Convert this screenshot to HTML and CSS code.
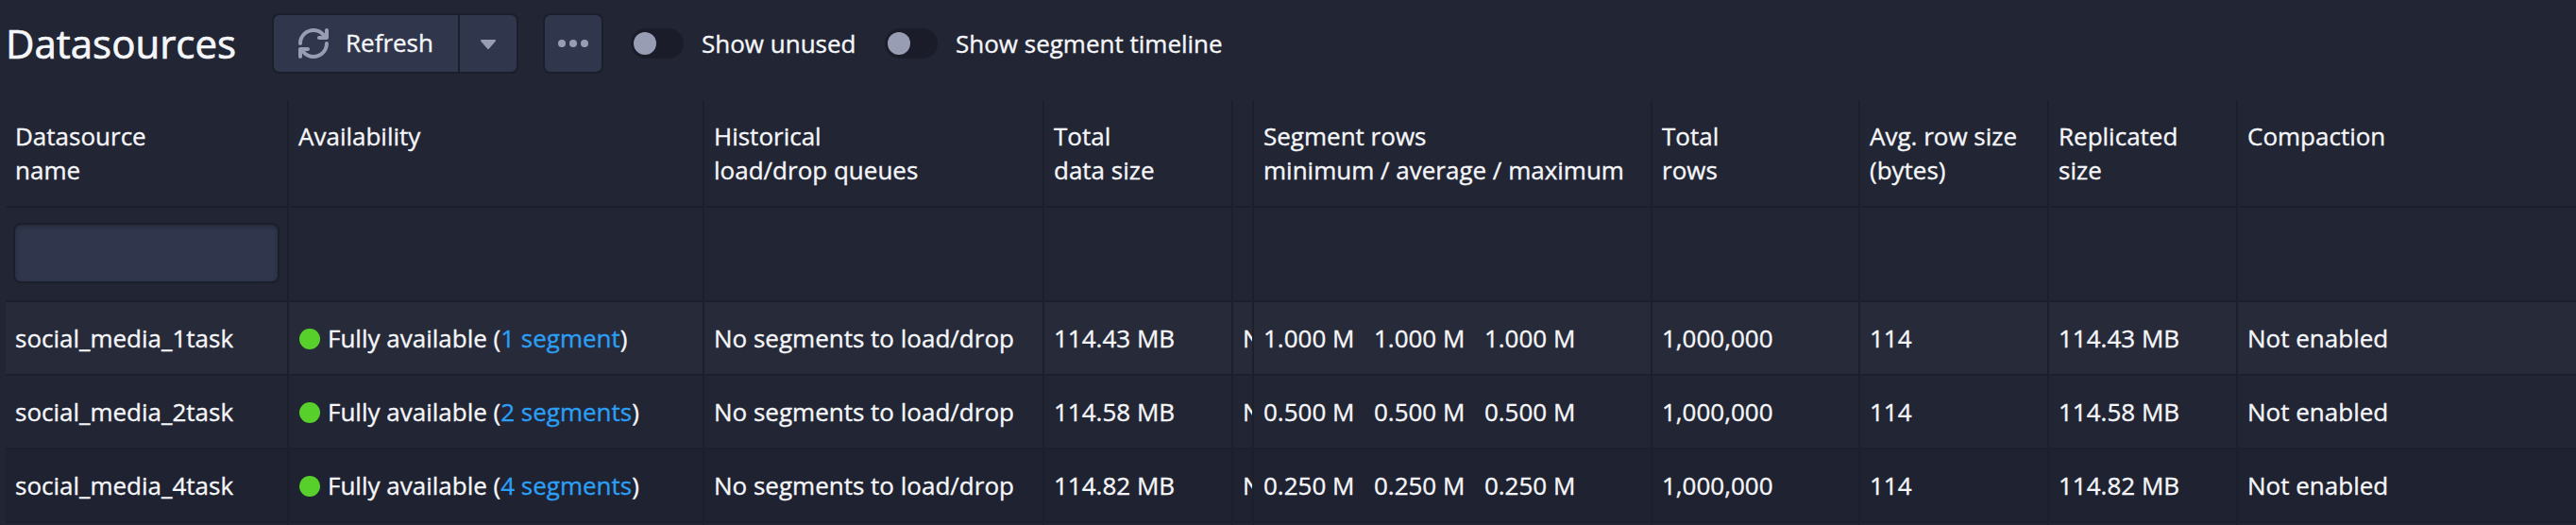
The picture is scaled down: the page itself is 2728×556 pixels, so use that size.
FILE: index.html
```
<!DOCTYPE html>
<html lang="en">
<head>
<meta charset="utf-8">
<title>Datasources</title>
<link rel="stylesheet" href="styles.css">
</head>
<body>
<header class="control-bar">
  <h1 class="title">Datasources</h1>
  <div class="button-group">
    <button class="button refresh">
      <svg class="icon" viewBox="0 0 16 16"><path d="M14.99 6.99c-.55 0-1 .45-1 1 0 3.31-2.69 6-6 6-1.77 0-3.36-.78-4.46-2h1.46c.55 0 1-.45 1-1s-.45-1-1-1h-4c-.55 0-1 .45-1 1v4c0 .55.45 1 1 1s1-.45 1-1v-1.74a7.950 7.950 0 0 0 6 2.740c4.420 0 8-3.580 8-8 0-.55-.45-1-1-1zm0-7c-.55 0-1 .45-1 1v1.740a7.950 7.950 0 0 0-6-2.740c-4.420 0-8 3.580-8 8 0 .55.45 1 1 1s1-.45 1-1c0-3.310 2.690-6 6-6 1.770 0 3.360.780 4.460 2h-1.460c-.55 0-1 .45-1 1s.45 1 1 1h4c.55 0 1-.45 1-1v-4c0-.55-.45-1-1-1z"/></svg>
      <span class="button-text">Refresh</span>
    </button>
    <button class="button square caret" aria-label="Refresh interval">
      <svg class="icon" viewBox="0 0 16 16"><path d="M12 6.5c0-.28-.22-.5-.5-.5h-7a.495.495 0 0 0-.37.83l3.500 4c.09.1.22.17.37.17s.28-.07.37-.17l3.500-4c.08-.09.13-.2.13-.33z"/></svg>
    </button>
  </div>
  <button class="button square more" aria-label="More">
    <svg class="icon" viewBox="0 0 16 16"><circle cx="2" cy="8" r="2"/><circle cx="8" cy="8" r="2"/><circle cx="14" cy="8" r="2"/></svg>
  </button>
  <label class="switch first"><span class="track"><span class="knob"></span></span>Show unused</label>
  <label class="switch second"><span class="track"><span class="knob"></span></span>Show segment timeline</label>
</header>
<main class="table">
  <div class="row head">
    <div class="cell">Datasource<br>name</div>
    <div class="cell">Availability</div>
    <div class="cell">Historical<br>load/drop queues</div>
    <div class="cell">Total<br>data size</div>
    <div class="cell"></div>
    <div class="cell">Segment rows<br>minimum / average / maximum</div>
    <div class="cell">Total<br>rows</div>
    <div class="cell">Avg. row size<br>(bytes)</div>
    <div class="cell">Replicated<br>size</div>
    <div class="cell">Compaction</div>
  </div>
  <div class="row filters">
    <div class="cell"><input class="filter" type="text" aria-label="Filter datasource name"></div>
    <div class="cell"></div><div class="cell"></div><div class="cell"></div><div class="cell"></div><div class="cell"></div><div class="cell"></div><div class="cell"></div><div class="cell"></div><div class="cell"></div>
  </div>
  <div class="row data light">
    <div class="cell">social_media_1task</div>
    <div class="cell"><span class="dot"></span>Fully available (<a class="link">1 segment</a>)</div>
    <div class="cell">No segments to load/drop</div>
    <div class="cell">114.43 MB</div>
    <div class="cell">N</div>
    <div class="cell triple"><span>1.000 M</span><span>1.000 M</span><span>1.000 M</span></div>
    <div class="cell">1,000,000</div>
    <div class="cell">114</div>
    <div class="cell">114.43 MB</div>
    <div class="cell">Not enabled</div>
  </div>
  <div class="row data">
    <div class="cell">social_media_2task</div>
    <div class="cell"><span class="dot"></span>Fully available (<a class="link">2 segments</a>)</div>
    <div class="cell">No segments to load/drop</div>
    <div class="cell">114.58 MB</div>
    <div class="cell">N</div>
    <div class="cell triple"><span>0.500 M</span><span>0.500 M</span><span>0.500 M</span></div>
    <div class="cell">1,000,000</div>
    <div class="cell">114</div>
    <div class="cell">114.58 MB</div>
    <div class="cell">Not enabled</div>
  </div>
  <div class="row data dark">
    <div class="cell">social_media_4task</div>
    <div class="cell"><span class="dot"></span>Fully available (<a class="link">4 segments</a>)</div>
    <div class="cell">No segments to load/drop</div>
    <div class="cell">114.82 MB</div>
    <div class="cell">N</div>
    <div class="cell triple"><span>0.250 M</span><span>0.250 M</span><span>0.250 M</span></div>
    <div class="cell">1,000,000</div>
    <div class="cell">114</div>
    <div class="cell">114.82 MB</div>
    <div class="cell">Not enabled</div>
  </div>
  <div class="row tail">
    <div class="cell"></div><div class="cell"></div><div class="cell"></div><div class="cell"></div><div class="cell"></div><div class="cell"></div><div class="cell"></div><div class="cell"></div><div class="cell"></div><div class="cell"></div>
  </div>
</main>
</body>
</html>
```
FILE: styles.css
```
* { box-sizing: border-box; }
body {
  margin: 0;
  height: 556px;
  overflow: hidden;
  background: #222533;
  color: #f5f6f9;
  font: 26px/36px "Open Sans", "Noto Sans", sans-serif;
  -webkit-text-stroke: 0.35px currentColor;
}
.control-bar {
  display: flex;
  align-items: center;
  height: 106px;
  padding: 0 0 14px 6px;
}
.title {
  width: 284px;
  margin: 0;
  font-size: 42px;
  font-weight: 400;
  line-height: 60px;
  -webkit-text-stroke-width: 0.7px;
}
.button-group { display: flex; gap: 2px; }
.button {
  display: flex;
  align-items: center;
  justify-content: center;
  height: 60px;
  padding: 0;
  border: 0;
  border-radius: 6px;
  background: #30364b;
  box-shadow: 0 0 0 2px #1b1e2b;
  color: inherit;
  font: inherit;
}
.refresh {
  width: 195px;
  gap: 18px;
  justify-content: flex-start;
  padding-left: 26px;
  border-radius: 6px 0 0 6px;
}
.button-text { padding-bottom: 2px; }
.square { width: 60px; }
.caret { border-radius: 0 6px 6px 0; }
.more { margin-left: 30px; }
.icon {
  display: block;
  width: 32px;
  height: 32px;
  fill: #989db3;
}
.switch {
  display: flex;
  align-items: center;
  gap: 19px;
  white-space: nowrap;
}
.switch.first { margin-left: 31px; width: 269px; }
.track {
  display: flex;
  width: 56px;
  height: 32px;
  padding: 4px 3px;
  border-radius: 16px;
  background: #1a1d29;
}
.knob {
  width: 24px;
  height: 24px;
  border-radius: 50%;
  background: #989db3;
}
.table { margin-left: 6px; }
.row {
  display: grid;
  grid-template-columns: 300px 440px 360px 200px 22px 422px 220px 200px 200px 1fr;
  border-bottom: 2px solid #1c1f2c;
}
.cell {
  padding: 0 8px 0 10px;
  border-right: 2px solid #1c1f2c;
  overflow: hidden;
  white-space: nowrap;
}
.cell:last-child { border-right: 0; }
.head { height: 114px; }
.head .cell { padding-top: 20px; }
.filters { height: 100px; }
.filters .cell { padding-top: 18px; }
.filter {
  display: block;
  width: 278px;
  height: 60px;
  border: 0;
  border-radius: 6px;
  background: #30364b;
  box-shadow: 0 0 0 2px #1b1e2b, inset 0 2px 4px rgba(16, 20, 32, .35);
}
.data { height: 78px; }
.data .cell {
  display: flex;
  align-items: center;
  white-space: pre;
}
.tail { height: 2px; border-bottom: 0; }
.light { background: #272a38; }
.dark { background: #1f2230; }
.dot {
  flex: none;
  width: 22px;
  height: 22px;
  margin: 1px 8px 0 1px;
  border-radius: 50%;
  background: #57d02b;
}
.link { color: #2b9ff5; }
.data .triple { gap: 20.5px; }
```
